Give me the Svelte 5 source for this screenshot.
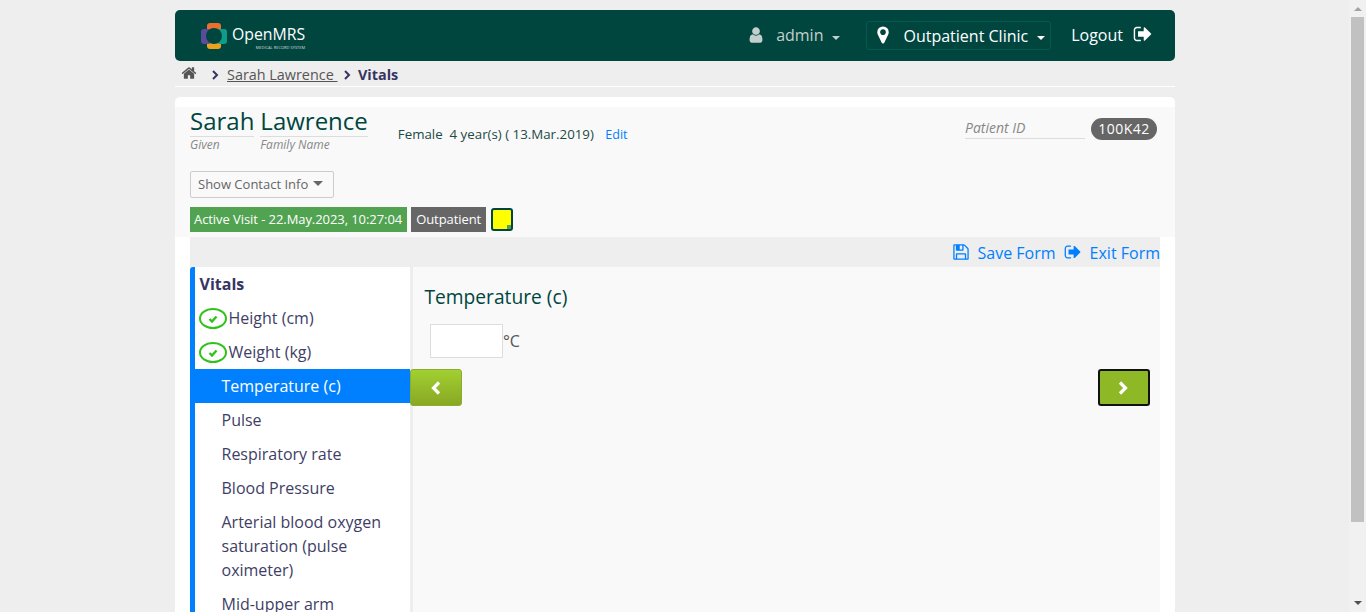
<script>
  const steps = [
    { label: 'Height (cm)', done: true },
    { label: 'Weight (kg)', done: true },
    { label: 'Temperature (c)', active: true },
    { label: 'Pulse' },
    { label: 'Respiratory rate' },
    { label: 'Blood Pressure' },
    { label: 'Arterial blood oxygen saturation (pulse oximeter)' },
    { label: 'Mid-upper arm circumference (cm)' }
  ];

  const signOut = 'M704 1440q0 4 1 20t.5 26.5-3 23.5-10 19.5-20.5 6.5h-320q-119 0-203.5-84.5t-84.5-203.5v-704q0-119 84.5-203.5t203.5-84.5h320q13 0 22.5 9.5t9.5 22.5q0 4 1 20t.5 26.5-3 23.5-10 19.5-20.5 6.5h-320q-66 0-113 47t-47 113v704q0 66 47 113t113 47h312l11.5 1 11.5 3 8 5.5 7 9 2 13.5zm928-544q0 26-19 45l-544 544q-19 19-45 19t-45-19-19-45v-288h-448q-26 0-45-19t-19-45v-384q0-26 19-45t45-19h448v-288q0-26 19-45t45-19 45 19l544 544q19 19 19 45z';
</script>

<div class="page">
  <div class="main">
    <div class="wrapper">
      <header class="topbar">
        <div class="logo">
          <svg class="logo-mark" width="26" height="26" viewBox="0 0 26 26">
            <rect x="6" y="0" width="14" height="10" rx="3" fill="#e9702d" />
            <rect x="6" y="16" width="14" height="10" rx="3" fill="#eba31f" />
            <rect x="0" y="6" width="10" height="15" rx="3" fill="#5b4b9c" />
            <rect x="16" y="6" width="10" height="15" rx="3" fill="#0f9d8a" />
            <circle cx="13" cy="13" r="8" fill="#00463f" />
          </svg>
          <div class="logo-text">
            <span class="logo-name">OpenMRS</span>
            <span class="logo-sub">MEDICAL RECORD SYSTEM</span>
          </div>
        </div>
        <nav class="usernav">
          <span class="user">
            <svg class="user-icon" viewBox="0 0 1792 1792"><path fill="currentColor" d="M1536 1399q0 109-62.500 187t-150.500 78h-854q-88 0-150.500-78t-62.500-187q0-85 8.500-160.500t31.500-152 58.500-131 94-89 134.500-34.500q131 128 313 128t313-128q76 0 134.500 34.500t94 89 58.500 131 31.500 152 8.500 160.500zm-256-887q0 159-112.500 271.500t-271.500 112.500-271.500-112.500-112.500-271.500 112.500-271.500 271.500-112.500 271.500 112.500 112.500 271.500z" /></svg>
            <span class="nudge">admin</span>
            <i class="caret"></i>
          </span>
          <span class="location">
            <svg class="pin-icon" viewBox="0 0 1792 1792"><path fill="currentColor" d="M1152 640q0-106-75-181t-181-75-181 75-75 181 75 181 181 75 181-75 75-181zm256 0q0 109-33 179l-364 774q-16 33-47.500 52t-67.500 19-67.500-19-46.500-52l-365-774q-33-70-33-179 0-212 150-362t362-150 362 150 150 362z" /></svg>
            Outpatient Clinic
            <i class="caret"></i>
          </span>
          <span class="logout">
            <span class="nudge">Logout</span>
            <svg class="logout-icon" viewBox="0 0 1792 1792"><path fill="currentColor" d={signOut} /></svg>
          </span>
        </nav>
      </header>

      <div class="breadcrumb">
        <svg class="home" viewBox="0 0 1792 1792"><path fill="currentColor" d="M1472 992v480q0 26-19 45t-45 19h-384v-384h-256v384h-384q-26 0-45-19t-19-45v-480q0-1 .5-3t.5-3l575-474 575 474q1 2 1 6zm223-69l-62 74q-8 9-21 11h-3q-13 0-21-7l-692-577-692 577q-12 8-24 7-13-2-21-11l-62-74q-8-10-7-23.500t11-21.500l719-599q32-26 76-26t76 26l244 204v-195q0-14 9-23t23-9h192q14 0 23 9t9 23v408l219 182q10 8 11 21.500t-7 23.500z" /></svg>
        <svg class="chev first" viewBox="0 0 8 10"><path d="M2 1l4 4-4 4" /></svg>
        <a href="#patient">Sarah Lawrence&nbsp;</a>
        <svg class="chev" viewBox="0 0 8 10"><path d="M2 1l4 4-4 4" /></svg>
        <strong>Vitals</strong>
      </div>

      <section class="card">
        <div class="patient">
          <div class="patient-top">
            <div class="name">
              <div class="name-part given">
                <span class="big">Sarah</span>
                <em>Given</em>
              </div>
              <div class="name-part family">
                <span class="big">Lawrence</span>
                <em>Family Name</em>
              </div>
            </div>
            <div class="demo">Female&nbsp; 4 year(s) ( 13.Mar.2019) <a href="#edit">Edit</a></div>
            <div class="identifier">
              <em>Patient ID</em>
              <span class="badge">100K42</span>
            </div>
          </div>
          <button class="contact">Show Contact Info <i class="caret dark"></i></button>
          <div class="visit">
            <span class="tag green">Active Visit - 22.May.2023, 10:27:04</span>
            <span class="tag grey">Outpatient</span>
            <span class="note"><i></i></span>
          </div>
        </div>

        <div class="form">
          <div class="toolbar">
            <a href="#save">
              <svg viewBox="0 0 1792 1792"><path fill="currentColor" d="M512 1536h768v-384h-768v384zm896 0h128v-896q0-14-10-38.500t-20-34.500l-281-281q-10-10-34-20t-39-10v416q0 40-28 68t-68 28h-576q-40 0-68-28t-28-68v-416h-128v1280h128v-416q0-40 28-68t68-28h832q40 0 68 28t28 68v416zm-384-928v-320q0-13-9.500-22.500t-22.500-9.500h-192q-13 0-22.500 9.500t-9.500 22.500v320q0 13 9.500 22.500t22.500 9.500h192q13 0 22.500-9.500t9.500-22.500zm640 32v928q0 40-28 68t-68 28h-1344q-40 0-68-28t-28-68v-1344q0-40 28-68t68-28h928q40 0 88 20t76 48l280 280q28 28 48 76t20 88z" /></svg>
              Save Form
            </a>
            <a href="#exit">
              <svg viewBox="0 0 1792 1792"><path fill="currentColor" d={signOut} /></svg>
              Exit Form
            </a>
          </div>

          <div class="body">
            <aside class="steps">
              <h3>Vitals</h3>
              {#each steps as step}
                <div class="step" class:active={step.active} class:done={step.done}>
                  {#if step.done}
                    <span class="check">
                      <svg width="10" height="8" viewBox="0 0 10 8"><path d="M1.500 4l2.500 2.500 4.500-5" /></svg>
                    </span>
                  {/if}
                  <span>{step.label}</span>
                </div>
              {/each}
            </aside>

            <div class="question">
              <h2>Temperature (c)</h2>
              <div class="field">
                <input type="text" />
                <span>°C</span>
              </div>
              <div class="buttons">
                <button class="nav-btn back" aria-label="Back">
                  <svg width="12" height="16" viewBox="0 0 12 16"><path d="M9 2.500L3.500 8 9 13.500" /></svg>
                </button>
                <button class="nav-btn next" aria-label="Next">
                  <svg width="12" height="16" viewBox="0 0 12 16"><path d="M2 2.500L7.500 8 2 13.500" /></svg>
                </button>
              </div>
            </div>
          </div>
        </div>
      </section>
    </div>
  </div>

  <div class="scrollbar">
    <span class="arrow up"></span>
    <span class="thumb"></span>
    <span class="arrow down"></span>
  </div>
</div>

<style>
  :global(body) {
    margin: 0;
    background: #eeeeee;
    font-family: "Open Sans", "Liberation Sans", sans-serif;
    color: #363463;
    overflow: hidden;
  }

  .page {
    display: flex;
    height: 612px;
    overflow: hidden;
  }

  .main {
    flex: 1;
    min-width: 0;
    padding-left: 1px;
  }

  .wrapper {
    width: 1000px;
    margin: 0 auto;
    padding-top: 10px;
  }

  .topbar {
    display: flex;
    align-items: center;
    height: 51px;
    padding: 0 23px 0 26px;
    background: #00463f;
    border-radius: 5px;
    color: #fff;
    font-size: 16px;
  }

  .logo {
    display: flex;
    align-items: center;
    gap: 5px;
  }

  .logo-mark {
    display: block;
  }

  .logo-text {
    display: flex;
    flex-direction: column;
    align-items: flex-end;
    margin-top: 5px;
  }

  .logo-name {
    font-size: 15.8px;
    line-height: 17px;
  }

  .logo-sub {
    margin-top: 2px;
    font-size: 4px;
    line-height: 5px;
    color: #cfdcd9;
  }

  .usernav {
    display: flex;
    align-items: center;
    margin-left: auto;
  }

  .nudge {
    margin-top: -2px;
  }

  .user {
    display: flex;
    align-items: center;
    color: #c3cfcc;
    margin-right: 26px;
  }

  .user-icon {
    width: 18px;
    height: 18px;
    margin-right: 11px;
    margin-top: -2px;
  }

  .caret {
    display: inline-block;
    width: 0;
    height: 0;
    margin-left: 9px;
    margin-top: 4px;
    border-top: 4px solid currentColor;
    border-left: 4px solid transparent;
    border-right: 4px solid transparent;
  }

  .location {
    display: flex;
    align-items: center;
    height: 27px;
    padding: 0 5px 0 6px;
    border: 1px solid #005c51;
    border-radius: 3px;
    margin-right: 20px;
  }

  .pin-icon {
    width: 20px;
    height: 20px;
    margin-right: 10px;
    margin-top: -2px;
  }

  .logout {
    display: flex;
    align-items: center;
  }

  .logout-icon {
    width: 20px;
    height: 20px;
    margin-left: 10px;
    margin-top: -3px;
    margin-right: -1px;
  }

  .breadcrumb {
    display: flex;
    align-items: center;
    height: 24px;
    padding-top: 1px;
    padding-left: 6px;
    border-bottom: 1px solid #fff;
    font-size: 14.4px;
    color: #5b57a6;
  }

  .breadcrumb a {
    color: #555;
  }

  .breadcrumb strong {
    color: #363463;
  }

  .home {
    width: 16px;
    height: 16px;
    margin-top: -3px;
    color: #555;
  }

  .chev {
    width: 8px;
    height: 10px;
    margin: 1px 7.5px 0 5px;
    fill: none;
    stroke: #363463;
    stroke-width: 2;
  }

  .chev.first {
    margin-left: 14px;
    margin-right: 8px;
  }

  .card {
    margin-top: 10px;
    background: #fff;
    border-radius: 5px 5px 0 0;
    padding-top: 10px;
  }

  .patient {
    height: 130px;
    box-sizing: border-box;
    padding: 0 18px 0 15px;
    background: #f9f9f9;
    color: #00463f;
  }

  .patient-top {
    display: flex;
    align-items: flex-start;
    height: 64px;
  }

  .name {
    display: flex;
    gap: 6px;
    margin-top: -1px;
  }

  .name-part {
    display: flex;
    flex-direction: column;
  }

  .big {
    font-size: 24px;
    line-height: 29px;
    padding-bottom: 1px;
    border-bottom: 1px solid #ddd;
  }

  .name-part em {
    font-size: 12px;
    line-height: 16px;
    color: #888;
  }

  .demo {
    margin: 18px 0 0 30px;
    font-size: 13.3px;
    line-height: 18px;
    color: #1c4a46;
  }

  .demo a {
    margin-left: 8px;
    font-size: 12.5px;
    color: #007fff;
    text-decoration: none;
  }

  .identifier {
    display: flex;
    align-items: flex-start;
    margin: 11px 0 0 auto;
  }

  .identifier em {
    width: 120px;
    font-size: 14px;
    line-height: 20px;
    color: #888;
    border-bottom: 1px solid #ddd;
    margin-right: 6px;
  }

  .badge {
    width: 66px;
    height: 22px;
    line-height: 22px;
    text-align: center;
    background: #666;
    color: #fff;
    border-radius: 11px;
    font-size: 14px;
    letter-spacing: 0.5px;
  }

  .contact {
    display: flex;
    align-items: center;
    height: 27px;
    width: 144px;
    padding: 0 7px 2px 7px;
    background: #f9f9f9;
    border: 1px solid #ccc;
    border-radius: 2px;
    font: inherit;
    font-size: 13px;
    color: #666;
    white-space: nowrap;
  }

  .caret.dark {
    margin-left: 5px;
    margin-top: 0;
    border-top-width: 5px;
    border-left-width: 5px;
    border-right-width: 5px;
  }

  .visit {
    display: flex;
    align-items: center;
    gap: 4px;
    margin-top: 9px;
  }

  .tag {
    height: 25px;
    line-height: 25px;
    padding: 0 5px 0 4px;
    font-size: 13px;
    letter-spacing: -0.07px;
    color: #fff;
  }

  .tag.grey {
    padding: 0 5px;
  }

  .green {
    background: #51a351;
  }

  .grey {
    background: #666;
  }

  .note {
    position: relative;
    width: 22px;
    height: 23px;
    box-sizing: border-box;
    margin-left: 1px;
    background: #ffff00;
    border: 2px solid #00463f;
    border-radius: 3px;
  }

  .note i {
    position: absolute;
    right: 0;
    bottom: 0;
    width: 4px;
    height: 4px;
    background: #51a351;
  }

  .form {
    margin: 0 15px;
  }

  .toolbar {
    display: flex;
    justify-content: flex-end;
    align-items: center;
    gap: 8px;
    height: 29px;
    padding-top: 1px;
    background: #eee;
  }

  .toolbar a {
    display: flex;
    align-items: center;
    gap: 8px;
    color: #007fff;
    font-size: 16px;
    text-decoration: none;
  }

  .toolbar svg {
    width: 18px;
    height: 18px;
    margin-top: -2px;
  }

  .body {
    display: flex;
    align-items: stretch;
    background: #f9f9f9;
  }

  .steps {
    width: 220px;
    box-sizing: border-box;
    flex-shrink: 0;
    background: #fff;
    border-left: 5px solid #007fff;
    border-top-left-radius: 3px;
    font-size: 16px;
    line-height: 24px;
    color: #403e66;
  }

  .steps h3 {
    margin: 0;
    padding: 5px 4.5px;
    font-size: 16px;
    font-weight: 700;
    line-height: 24px;
    color: #363463;
  }

  .step {
    display: flex;
    padding: 5px 10px 5px 26.5px;
  }

  .step.done {
    padding-left: 3.5px;
  }

  .step.active {
    background: #007fff;
    color: #fff;
  }

  .check {
    display: flex;
    align-items: center;
    justify-content: center;
    width: 28px;
    height: 21px;
    box-sizing: border-box;
    margin: 2px 2px 0 0;
    border: 2px solid #2fc31a;
    border-radius: 50%;
    flex-shrink: 0;
  }

  .check svg {
    fill: none;
    stroke: #2fc31a;
    stroke-width: 2.4;
  }

  .question {
    flex: 1;
    min-width: 0;
    border-left: 3px solid #eee;
    padding: 17px 10px 0 0;
  }

  .question h2 {
    margin: 0 0 14px 11.5px;
    font-size: 19.2px;
    font-weight: 400;
    line-height: 26px;
    color: #00463f;
  }

  .field {
    display: flex;
    align-items: center;
    margin-left: 17px;
    font-size: 16px;
    color: #555;
  }

  .field input {
    width: 73px;
    height: 34px;
    box-sizing: border-box;
    padding: 0;
    background: #fff;
    border: 1px solid #ddd;
    outline: none;
  }

  .buttons {
    display: flex;
    justify-content: space-between;
    margin: 11px 0 0 -3px;
  }

  .nav-btn {
    display: flex;
    align-items: center;
    justify-content: center;
    width: 52px;
    height: 37px;
    padding: 0;
    border-radius: 3px;
  }

  .nav-btn svg {
    fill: none;
    stroke: #fff;
    stroke-width: 3.2;
  }

  .back {
    background: linear-gradient(#a1d030, #88a824);
    border: 1px solid #8dab2c;
  }

  .next {
    background: #8fb827;
    border: 2px solid #111;
  }

  .scrollbar {
    display: flex;
    flex-direction: column;
    align-items: center;
    width: 17px;
    flex-shrink: 0;
    background: #f1f1f1;
  }

  .arrow {
    width: 0;
    height: 0;
    border-left: 4px solid transparent;
    border-right: 4px solid transparent;
  }

  .arrow.up {
    margin-top: 7px;
    border-bottom: 4px solid #a3a3a3;
  }

  .arrow.down {
    margin-bottom: 7px;
    border-top: 4px solid #505050;
  }

  .thumb {
    width: 13px;
    height: 505px;
    margin: 6px 0 auto;
    background: #c1c1c1;
  }
</style>
